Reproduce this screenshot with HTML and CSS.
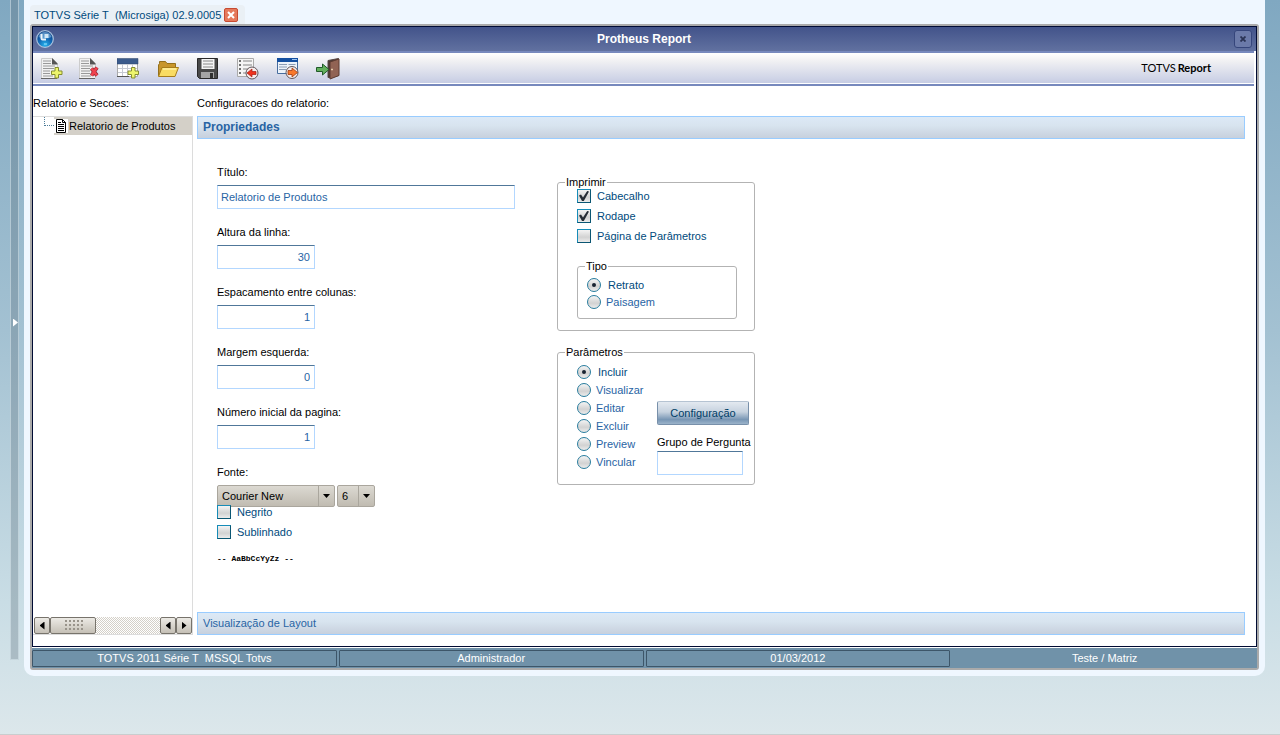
FILE: index.html
```html
<!DOCTYPE html>
<html lang="pt-BR">
<head>
<meta charset="utf-8">
<title>Protheus Report</title>
<link rel="stylesheet" href="styles.css">
</head>
<body>
<div class="page">
  <aside class="rail"><button class="rail-toggle" type="button" aria-label="Expandir menu"></button></aside>
  <main class="shell">
    <div class="tabs">
      <div class="tab"><span>TOTVS Série T&nbsp; (Microsiga) 02.9.0005</span>
        <button class="tab-close" type="button" aria-label="Fechar aba"><svg width="8" height="8" viewBox="0 0 8 8"><path d="M1 1l6 6M7 1l-6 6" stroke="#fff" stroke-width="2"/></svg></button>
      </div>
    </div>
    <div class="frame">
      <section class="window">
        <header class="titlebar">
          <svg class="orb" width="18" height="18" viewBox="0 0 18 18">
            <defs><radialGradient id="orb" cx=".5" cy=".85" r=".8"><stop offset="0" stop-color="#27b4ee"/><stop offset=".5" stop-color="#1268b4"/><stop offset="1" stop-color="#0b3a80"/></radialGradient></defs>
            <circle cx="9" cy="9" r="8.300" fill="url(#orb)" stroke="#a9c3de" stroke-width="1.200"/>
            <path d="M2.500 7a6.700 6.700 0 0 1 13 0q-6 3-13 0z" fill="#9fd3f5" opacity=".5"/>
            <path d="M4.500 4h2v4.500h3.500v2H6.500q-2 0-2-2z" fill="#fff" opacity=".9"/><path d="M8.500 4h4v4h-4z" fill="#e6f4fd" opacity=".85"/><path d="M8 13.500h3v1H8z" fill="#9de4ff"/>
          </svg>
          <h1>Protheus Report</h1>
          <button class="win-close" type="button" aria-label="Fechar"><svg width="6" height="6" viewBox="0 0 6 6"><path d="M.5.500l5 5M5.500.500l-5 5" stroke="#2a3354" stroke-width="1.800"/></svg></button>
        </header>
        <div class="toolbar">
          <div class="tools tools-tight">
            <button type="button" aria-label="Nova seção"><svg viewBox="0 0 22 22"><path d="M.5.500h11l5 5v15H.5z" fill="#f1f1f1" stroke="#ccc"/><path d="M11 0l5.500 5.500v1H11z" fill="#555"/><path d="M2 3h8M2 5.500h8M2 8h12M2 10.500h11M2 13h7M2 15.500h7M2 18h10" stroke="#999"/><path d="M0 20.500h16" stroke="#666"/><path d="M14 9.500h3.500V13H21v3.500h-3.500V20H14v-3.500h-3.500V13H14z" fill="#edf56c" stroke="#858d30"/></svg></button>
            <button type="button" aria-label="Excluir seção"><svg viewBox="0 0 22 22"><path d="M.5.500h11l5 5v15H.5z" fill="#f1f1f1" stroke="#ccc"/><path d="M11 0l5.500 5.500v1H11z" fill="#555"/><path d="M2 3h8M2 5.500h8M2 8h12M2 10.500h9M2 13h9M2 15.500h9M2 18h10" stroke="#999"/><path d="M0 20.500h16" stroke="#666"/><path d="M12.500 10.500l5.500 7M18 9.500l-5.500 8" stroke="#8e2632" stroke-width="3.800"/><path d="M12.500 10.500l5.500 7M18 9.500l-5.500 8" stroke="#f0434f" stroke-width="2.400"/></svg></button>
          </div>
          <div class="tools">
            <button type="button" aria-label="Nova tabela"><svg viewBox="0 0 22 22"><path d="M.5 1.500h20v17H.5z" fill="#fff" stroke="#aaa"/><path d="M0 .5h21V6H0z" fill="#3b5b8c" stroke="#2d4569" stroke-width=".5"/><path d="M1 10.500h19M1 14.500h19M5.500 6v12M10.500 6v12M15.500 6v12" stroke="#c5c9d2"/><path d="M0 18.500h12" stroke="#555"/><path d="M14.500 9.500H18V13h3.500v3.500H18V20h-3.500v-3.500H11V13h3.500z" fill="#edf56c" stroke="#858d30"/></svg></button>
            <button type="button" aria-label="Abrir"><svg viewBox="0 0 22 22"><path d="M1.500 18V7l1-1.500V3.500h6l1.500 2h8.500v4" fill="#c8962c" stroke="#94701c"/><path d="M5 9.500h16.500L18 18.500H1.500z" fill="#f9dc62" stroke="#a77d1b"/><path d="M6 11h13" stroke="#fff1a6" stroke-width="1.500"/></svg></button>
            <button type="button" aria-label="Salvar"><svg viewBox="0 0 22 22"><path d="M.5.500h20v20H2.500l-2-2z" fill="#494949" stroke="#292929"/><path d="M4.500 1h13v10h-13z" fill="#f5f5f5"/><path d="M6 3h10M6 6h10M6 9h10" stroke="#888"/><path d="M4 14h13v6H4z" fill="#a5a5a5"/><path d="M13 15h3v5h-3z" fill="#303030"/></svg></button>
            <button type="button" aria-label="Importar"><svg viewBox="0 0 22 22"><path d="M.5.500h16v18H.5z" fill="#f5f5f5" stroke="#aaa"/><path d="M2 3h2M2 7h2M2 11h2M2 15h2" stroke="#444" stroke-width="1.500"/><path d="M6 3h9M6 7h9M6 11h5M6 15h3" stroke="#aaa" stroke-width="1.500"/><circle cx="15" cy="15" r="6" fill="#f5ecec" stroke="#5f5559"/><path d="M10 15l5-4v2.500h4v3h-4V19z" fill="#ef321d" stroke="#a81b12" stroke-width=".7"/></svg></button>
            <button type="button" aria-label="Exportar"><svg viewBox="0 0 22 22"><path d="M.5.500h20v15H.5z" fill="#edf3fa" stroke="#476d9e"/><path d="M0 0h21v4H0z" fill="#1550a0"/><path d="M15 1.500h5" stroke="#9fc5f0"/><path d="M2 6.500h8M11.500 6.500h7M2 9h8M2 11.500h7" stroke="#8c9db5"/><circle cx="15" cy="14.500" r="6" fill="#f5ecec" stroke="#5f5559"/><path d="M20.500 14.500l-5.500-4.500v2.500h-4v4h4V19z" fill="#f9782b" stroke="#a23c12" stroke-width=".8"/></svg></button>
            <button type="button" aria-label="Sair"><svg viewBox="0 0 24 22"><path d="M12 2.500L22.500.500v17L15 19.500h-3z" fill="#4b3733" stroke="#574844"/><path d="M14 4l9-3v16.500L14 21z" fill="#916354" stroke="#5d3c32"/><path d="M15 11.500h2" stroke="#e3c9a8" stroke-width="1.500"/><path d="M.5 9.500h6V6l6.500 5.500L6.500 17v-3.500h-6z" fill="#63b05d" stroke="#205a29"/></svg></button>
          </div>
          <div class="brand">TOTVS<b>Report</b></div>
        </div>
        <div class="content">
          <div class="column">
            <div class="column-label">Relatorio e Secoes:</div>
            <div class="tree">
              <div class="tree-row"><span class="branch"></span>
                <a class="node" href="#relatorio"><svg width="14" height="14" viewBox="0 0 14 14"><path d="M0 0h14v14H0z" fill="#fff"/><path d="M2.500.500h6l3 3v10h-9z" fill="#fff" stroke="#000"/><path d="M8.500.500v3h3M4 3.500h3M4 5.500h6M4 7.500h6M4 9.500h6M4 11.500h6" fill="none" stroke="#000"/></svg><span>Relatorio de Produtos</span></a>
              </div>
              <div class="scrollbar">
                <button type="button" class="left" aria-label="Rolar à esquerda"></button>
                <div class="thumb"></div><div class="track"></div>
                <button type="button" class="left" aria-label="Voltar"></button>
                <button type="button" class="right" aria-label="Rolar à direita"></button>
              </div>
            </div>
          </div>
          <div class="column">
            <div class="column-label">Configuracoes do relatorio:</div>
            <button class="accordion active" type="button">Propriedades</button>
            <form class="panel">
              <div class="fields">
                <div class="field"><label for="titulo">Título:</label><input class="text" id="titulo" value="Relatorio de Produtos"></div>
                <div class="field"><label for="altura">Altura da linha:</label><input class="text number" id="altura" value="30"></div>
                <div class="field"><label for="espaco">Espacamento entre colunas:</label><input class="text number" id="espaco" value="1"></div>
                <div class="field"><label for="margem">Margem esquerda:</label><input class="text number" id="margem" value="0"></div>
                <div class="field"><label for="pagina">Número inicial da pagina:</label><input class="text number" id="pagina" value="1"></div>
                <div class="field"><label for="fonte">Fonte:</label>
                  <div class="selects">
                    <div class="select wide"><select id="fonte"><option>Courier New</option></select></div>
                    <div class="select narrow"><select aria-label="Tamanho da fonte"><option>6</option></select></div>
                  </div>
                  <div class="checks">
                    <label class="check"><input type="checkbox">Negrito</label>
                    <label class="check"><input type="checkbox">Sublinhado</label>
                  </div>
                </div>
                <div class="sample">-- AaBbCcYyZz --</div>
              </div>
              <div class="groups">
                <fieldset>
                  <legend>Imprimir</legend>
                  <div class="checks">
                    <label class="check"><input type="checkbox" checked>Cabecalho</label>
                    <label class="check"><input type="checkbox" checked>Rodape</label>
                    <label class="check"><input type="checkbox">Página de Parâmetros</label>
                  </div>
                  <fieldset class="inner">
                    <legend>Tipo</legend>
                    <label class="radio"><input type="radio" name="tipo" checked>Retrato</label>
                    <label class="radio"><input type="radio" name="tipo">Paisagem</label>
                  </fieldset>
                </fieldset>
                <fieldset class="params">
                  <legend>Parâmetros</legend>
                  <div class="params-grid">
                    <div class="options">
                      <label class="radio"><input type="radio" name="acao" checked>Incluir</label>
                      <label class="radio"><input type="radio" name="acao">Visualizar</label>
                      <label class="radio"><input type="radio" name="acao">Editar</label>
                      <label class="radio"><input type="radio" name="acao">Excluir</label>
                      <label class="radio"><input type="radio" name="acao">Preview</label>
                      <label class="radio"><input type="radio" name="acao">Vincular</label>
                    </div>
                    <div class="config">
                      <button class="config-button" type="button">Configuração</button>
                      <label for="grupo">Grupo de Pergunta</label>
                      <input class="text" id="grupo">
                    </div>
                  </div>
                </fieldset>
              </div>
            </form>
            <button class="accordion" type="button">Visualização de Layout</button>
          </div>
        </div>
      </section>
      <footer class="status"><div>TOTVS 2011 Série T&nbsp; MSSQL Totvs</div><div>Administrador</div><div>01/03/2012</div><div class="plain">Teste / Matriz</div></footer>
    </div>
  </main>
</div>
</body>
</html>
```
FILE: styles.css
```css
* { box-sizing: border-box; }
body { margin: 0; font: 11px/14px "Liberation Sans", Arial, sans-serif; color: #000; }
button, input, select { font: inherit; margin: 0; padding: 0; border-radius: 0; }
svg { display: block; flex: none; }

.page {
  display: flex;
  min-height: 100vh;
  padding: 0 15px 58px 10px;
  background: linear-gradient(#80a8c1, #a3c1d2 45%, #c9dde5 82%, #dce7eb);
  border-bottom: 1px solid #c9cdce;
}
.rail {
  display: flex;
  flex: none;
  width: 9px;
  margin: 0 5px 16px 0;
  align-items: center;
  background: rgba(90, 110, 120, .32);
  border: solid rgba(225, 240, 245, .5);
  border-width: 0 1px 1px;
}
.rail-toggle {
  width: 5px;
  height: 8px;
  margin: 0 0 14px 2px;
  border: 0;
  background: #fff;
  clip-path: polygon(0 0, 100% 50%, 0 100%);
}
.shell {
  display: flex;
  flex: 1;
  flex-direction: column;
  padding: 0 6px 6px;
  background: #eff7ff;
  border-radius: 0 0 10px 10px;
}
.tabs { display: flex; height: 24px; padding-top: 5px; }
.tab {
  display: flex;
  align-items: center;
  gap: 3px;
  padding: 0 7px 0 4px;
  background: #eaf0f5;
  border-radius: 4px 4px 0 0;
  color: #004a7c;
}
.tab-close {
  display: grid;
  place-items: center;
  width: 14px;
  height: 14px;
  border: 1px solid #c74a31;
  border-radius: 2px;
  background: #e5795b;
}
.frame {
  display: flex;
  flex: 1;
  flex-direction: column;
  border: 2px solid #aaa;
  border-radius: 3px;
  background: #fff;
}
.window {
  display: flex;
  flex: 1;
  flex-direction: column;
  margin-bottom: 1px;
  border: 1px solid #000b33;
}
.titlebar {
  display: flex;
  align-items: center;
  justify-content: space-between;
  height: 24px;
  padding: 0 4px 0 3px;
  background: linear-gradient(#42538a, #6171a0);
  color: #fff;
}
.titlebar h1 { margin: 0; font-size: 12px; line-height: 14px; }
.win-close {
  display: grid;
  place-items: center;
  width: 18px;
  height: 18px;
  border: 1px solid #35457b;
  border-radius: 3px;
  background: #6b7aa9;
}
.toolbar {
  display: flex;
  align-items: center;
  gap: 14px;
  height: 35px;
  margin-right: 2px;
  padding: 1px 43px 0 7px;
  border: solid #7789bd;
  border-width: 2px 0;
  background: linear-gradient(#fff, #f1f1f3 25%, #c7cde4 96%, #fff 97%);
}
.tools { display: flex; gap: 16px; }
.tools-tight { gap: 14px; }
.tools button {
  display: grid;
  place-items: center;
  width: 24px;
  height: 24px;
  border: 0;
  background: none;
}
.tools svg { height: 22px; }
.brand { display: flex; gap: 2px; margin-left: auto; padding-bottom: 3px; font: 11px/14px Lato, "Noto Sans", sans-serif; }

.content {
  display: grid;
  flex: 1;
  grid-template-columns: 160px 1fr;
  gap: 4px;
  padding: 0 11px 11px 0;
}
.column { display: flex; flex-direction: column; }
.column-label { padding: 10px 0 6px; }
.tree {
  display: flex;
  flex: 1;
  flex-direction: column;
  justify-content: space-between;
  border: solid #dcdcdc;
  border-width: 1px 1px 1px 0;
}
.tree-row { display: flex; height: 18px; }
.branch {
  width: 10px;
  height: 9px;
  margin: 0 0 0 11px;
  border: dotted #4d7c99;
  border-width: 0 0 1px 1px;
}
.node {
  display: flex;
  flex: 1;
  align-items: center;
  gap: 1px;
  background: #d4d0c8;
  color: #000;
  text-decoration: none;
}
.scrollbar { display: flex; height: 17px; padding-left: 1px; }
.scrollbar button, .thumb {
  width: 16px;
  border: 1px solid #77736b;
  border-radius: 2px;
  background: linear-gradient(#eceae5, #c5c0b6);
}
.scrollbar button { display: grid; place-items: center; }
.scrollbar button::before { content: ""; width: 5px; height: 8px; background: #000; }
.left::before { clip-path: polygon(100% 0, 0 50%, 100% 100%); }
.right::before { clip-path: polygon(0 0, 100% 50%, 0 100%); }
.scrollbar .thumb { display: grid; place-items: center; width: 46px; }
.thumb::before {
  content: "";
  width: 20px;
  height: 12px;
  background: conic-gradient(#99948b 25%, transparent 0) 0 0 / 4px 4px;
}
.track { flex: 1; background: repeating-conic-gradient(#d4d0c8 0 25%, #fff 0 50%) 0 0 / 2px 2px; }

.accordion {
  height: 23px;
  padding: 0 5px 1px;
  border: 1px solid #99ccff;
  background: linear-gradient(#dce9f6, #d8e4ef 40%, #c7d0dd);
  color: #2864a4;
  text-align: left;
}
.accordion.active { font-size: 12px; font-weight: bold; }
.panel {
  display: grid;
  flex: 1;
  grid-template-columns: 298px 198px;
  gap: 42px;
  padding: 25px 20px 32px;
}
.fields { display: flex; flex-direction: column; gap: 15px; }
.field { display: flex; flex-direction: column; align-items: flex-start; gap: 5px; }
.field > label { line-height: 16px; }
.text {
  width: 100%;
  height: 24px;
  padding: 0 4px 0 3px;
  border: 1px solid #b3d7ff;
  border-top-color: #507799;
  background: #fff;
  color: #2864a4;
}
.number { width: 98px; text-align: right; }
.selects { display: flex; gap: 2px; margin-bottom: -7px; }
.select { position: relative; }
.wide { width: 118px; }
.narrow { width: 38px; }
.select select {
  appearance: none;
  width: 100%;
  height: 22px;
  padding: 0 4px;
  border: 1px solid #aaa69d;
  border-radius: 2px;
  background: linear-gradient(#dcd9d2, #c0bbb1);
  color: #000;
}
.select::before {
  content: "";
  position: absolute;
  top: 1px;
  right: 16px;
  bottom: 1px;
  border-left: 1px solid #aaa69d;
}
.select::after {
  content: "";
  position: absolute;
  top: 9px;
  right: 5px;
  width: 7px;
  height: 4px;
  background: #000;
  clip-path: polygon(0 0, 100% 0, 50% 100%);
}
.checks { position: relative; display: flex; flex-direction: column; gap: 6px; }
.check, .radio { display: flex; align-items: center; height: 14px; color: #004a7c; }
.check { gap: 6px; }
.check input, .radio input {
  appearance: none;
  display: grid;
  flex: none;
  place-items: center;
  width: 14px;
  height: 14px;
  border: 1px solid #0b5673;
  background: linear-gradient(#f4f4f4, #d2d2d2 60%, #ececec);
}
.check input { border-top-color: #168cb8; border-left-color: #168cb8; }
.check input:checked::before {
  content: "";
  width: 10px;
  height: 10px;
  background: #262c35;
  clip-path: polygon(0 45%, 20% 35%, 40% 65%, 82% 0, 100% 5%, 48% 100%, 30% 100%);
}
.radio { gap: 5px; color: #2864a4; }
.radio:has(input:checked) { gap: 7px; color: #004a7c; }
.radio input { border-radius: 50%; border-color: #287c9d; }
.radio input:checked::before { content: ""; width: 4px; height: 4px; border-radius: 50%; background: #182331; }
.sample { font: bold 8px/14px "Liberation Mono", "Courier New", monospace; margin-top: -2px; }

.groups { display: flex; flex-direction: column; gap: 14px; padding-top: 11px; }
fieldset {
  min-width: 0;
  margin: 0;
  padding: 0 17px 11px 19px;
  border: 1px solid #b3b3b3;
  border-radius: 3px;
}
legend { margin-left: -12px; padding: 0 1px; }
.inner { margin-top: 16px; padding: 5px 9px 9px; }
.inner legend { margin-left: -2px; }
.inner .radio + .radio { margin-top: 3px; }
.params { padding: 6px 5px 9px 19px; }
.params-grid { display: grid; grid-template-columns: 80px 1fr; }
.options { display: flex; flex-direction: column; gap: 4px; }
.config { display: flex; flex-direction: column; padding-top: 36px; white-space: nowrap; }
.config-button {
  width: 92px;
  height: 24px;
  margin-bottom: 10px;
  border: 1px solid #7890aa;
  border-top-color: #b5c3d2;
  border-radius: 2px;
  background: linear-gradient(#e3e9f0, #c6d2df 45%, #7896b4 80%, #9bb3ca);
  color: #003d66;
}
.config .text { width: 86px; margin-top: 2px; }

.status {
  display: grid;
  grid-template-columns: repeat(4, 1fr);
  gap: 2px;
  padding: 2px 0 1px;
  background: #7092a9;
  color: #fff;
  text-align: center;
}
.status div { border: 1px solid #3d5669; border-radius: 1px; line-height: 15px; }
.status .plain { border-color: transparent; }
```
